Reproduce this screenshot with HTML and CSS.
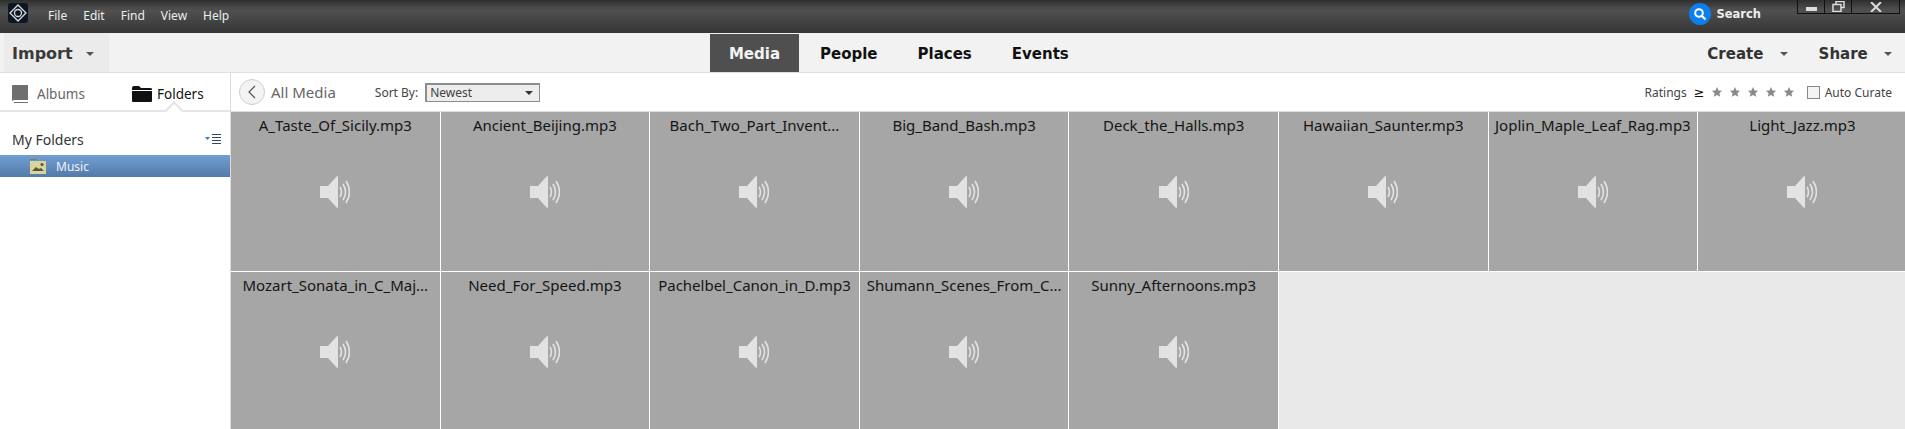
FILE: index.html
```html
<!DOCTYPE html>
<html lang="en">
<head>
  <meta charset="UTF-8">
  <title>Media</title>
  <link rel="stylesheet" href="styles.css">
</head>
<body>
  <svg class="defs" width="0" height="0">
    <symbol id="speaker" viewBox="0 0 30 32">
      <path d="M0 10h8l9-10q1 0 1 1v30q0 1-1 1l-9-10H0z" fill="#e2e2e2"/>
      <path d="M20 11q3 5 0 10M23 8q5 8 0 16M26 5q7 11 0 22" fill="none" stroke="#e2e2e2" stroke-width="1.6"/>
    </symbol>
    <symbol id="star" viewBox="0 0 12 12">
      <path d="M6 1l1.500 3.400 3.600.4-2.700 2.400.8 3.600L6 9l-3.200 1.800.8-3.600L.9 4.800l3.600-.4z" fill="#8a8a8a"/>
    </symbol>
  </svg>

  <header class="titlebar">
    <div class="logo">
      <svg width="20" height="20" viewBox="0 0 20 20">
        <path d="M10 2l8 8-8 8-8-8z" fill="none" stroke="#d8dde2" stroke-width="1.300"/>
        <circle cx="10" cy="10" r="3.500" fill="none" stroke="#d8dde2" stroke-width="1.300"/>
      </svg>
    </div>
    <nav class="menu">
      <span>File</span>
      <span>Edit</span>
      <span>Find</span>
      <span>View</span>
      <span>Help</span>
    </nav>
    <div class="search">
      <span class="search-icon">
        <svg width="14" height="14" viewBox="0 0 14 14">
          <circle cx="6" cy="6" r="3.800" fill="none" stroke="#fff" stroke-width="2"/>
          <path d="M9 9l3.500 3.500" stroke="#fff" stroke-width="2.200"/>
        </svg>
      </span>
      Search
    </div>
    <div class="window-btns">
      <span class="win-btn win-min"><i></i></span>
      <span class="win-btn win-max">
        <svg width="13" height="11" viewBox="0 0 13 11">
          <path d="M4 3V.5h8v6H9M1 3.500h8v7H1z" fill="none" stroke="#ddd" stroke-width="1.500"/>
        </svg>
      </span>
      <span class="win-btn win-close">
        <svg width="12" height="10" viewBox="0 0 12 10">
          <path d="M1 0l10 10M11 0L1 10" stroke="#ddd" stroke-width="2"/>
        </svg>
      </span>
    </div>
  </header>

  <div class="toolbar">
    <div class="import">Import <span class="caret"></span></div>
    <div class="tabs">
      <span class="tab active">Media</span>
      <span class="tab">People</span>
      <span class="tab">Places</span>
      <span class="tab">Events</span>
    </div>
    <div class="actions">
      <span class="action">Create <span class="caret"></span></span>
      <span class="action">Share <span class="caret"></span></span>
    </div>
  </div>

  <div class="main">
    <aside class="sidebar">
      <div class="side-tabs">
        <div class="side-tab">
          <svg width="18" height="20" viewBox="0 0 18 20">
            <path d="M1 2q0-1 1-1h15v15H3q-2 0-2 2zM3 18h14v1H3z" fill="#6f6f6f"/>
          </svg>
          Albums
        </div>
        <div class="side-tab current">
          <svg width="20" height="18" viewBox="0 0 20 18">
            <path d="M0 3q0-2 2-2h5l2 2h9q2 0 2 1v1H0zM0 6h20v10q0 1-1 1H1q-1 0-1-1z" fill="#111"/>
          </svg>
          Folders
        </div>
      </div>
      <div class="folders-head">
        <span>My Folders</span>
        <svg width="16" height="10" viewBox="0 0 16 10">
          <path d="M0 3h5L2.500 6z" fill="#3b7cc0"/>
          <path d="M7 .5h9M7 3.500h9M7 6.500h9M7 9.500h9" stroke="#34465a" stroke-width="1"/>
        </svg>
      </div>
      <div class="folder-row">
        <svg width="16" height="15" viewBox="0 0 16 15">
          <path d="M0 0h7v1H0z" fill="#7a7a70"/>
          <rect y="2" width="16" height="13" fill="#d8d49a"/>
          <path d="M2 12l4-4 3 2 2-1 3 3z" fill="#57553a"/>
          <circle cx="12" cy="5.500" r="1.500" fill="#57553a"/>
        </svg>
        Music
      </div>
    </aside>

    <section class="content">
      <div class="subbar">
        <span class="back">
          <svg width="10" height="14" viewBox="0 0 10 14">
            <path d="M8 1L2 7l6 6" fill="none" stroke="#555" stroke-width="1.200"/>
          </svg>
        </span>
        <span class="crumb">All Media</span>
        <span class="sort-label">Sort By:</span>
        <span class="sort-select">Newest <span class="sort-caret"></span></span>
        <div class="ratings">
          <span>Ratings</span>
          <span class="gte">≥</span>
          <svg class="star"><use href="#star"/></svg>
          <svg class="star"><use href="#star"/></svg>
          <svg class="star"><use href="#star"/></svg>
          <svg class="star"><use href="#star"/></svg>
          <svg class="star"><use href="#star"/></svg>
          <span class="check"></span>
          <span>Auto Curate</span>
        </div>
      </div>

      <div class="grid">
        <div class="cell"><div class="name">A_Taste_Of_Sicily.mp3</div><svg class="speaker"><use href="#speaker"/></svg></div>
        <div class="cell"><div class="name">Ancient_Beijing.mp3</div><svg class="speaker"><use href="#speaker"/></svg></div>
        <div class="cell"><div class="name">Bach_Two_Part_Invent...</div><svg class="speaker"><use href="#speaker"/></svg></div>
        <div class="cell"><div class="name">Big_Band_Bash.mp3</div><svg class="speaker"><use href="#speaker"/></svg></div>
        <div class="cell"><div class="name">Deck_the_Halls.mp3</div><svg class="speaker"><use href="#speaker"/></svg></div>
        <div class="cell"><div class="name">Hawaiian_Saunter.mp3</div><svg class="speaker"><use href="#speaker"/></svg></div>
        <div class="cell"><div class="name">Joplin_Maple_Leaf_Rag.mp3</div><svg class="speaker"><use href="#speaker"/></svg></div>
        <div class="cell"><div class="name">Light_Jazz.mp3</div><svg class="speaker"><use href="#speaker"/></svg></div>
        <div class="cell"><div class="name">Mozart_Sonata_in_C_Maj...</div><svg class="speaker"><use href="#speaker"/></svg></div>
        <div class="cell"><div class="name">Need_For_Speed.mp3</div><svg class="speaker"><use href="#speaker"/></svg></div>
        <div class="cell"><div class="name">Pachelbel_Canon_in_D.mp3</div><svg class="speaker"><use href="#speaker"/></svg></div>
        <div class="cell"><div class="name">Shumann_Scenes_From_C...</div><svg class="speaker"><use href="#speaker"/></svg></div>
        <div class="cell"><div class="name">Sunny_Afternoons.mp3</div><svg class="speaker"><use href="#speaker"/></svg></div>
      </div>
    </section>
  </div>
</body>
</html>
```

FILE: styles.css
```css
* {
  box-sizing: border-box;
}
html, body {
  height: 100%;
}
body {
  margin: 0;
  display: flex;
  flex-direction: column;
  overflow: hidden;
  font-family: "Noto Sans", "DejaVu Sans", sans-serif;
  font-size: 13px;
  color: #222;
  background: #fff;
}
.defs {
  position: absolute;
}
.titlebar {
  height: 33px;
  flex: none;
  display: flex;
  align-items: flex-start;
  background: linear-gradient(#2f2f2f, #505050 30%, #363636);
  color: #eee;
}
.logo {
  width: 20px;
  height: 20px;
  margin: 3px 0 0 8px;
  background: #0d1724;
  border-radius: 3px;
}
.menu {
  display: flex;
  gap: 16px;
  margin: 7px 0 0 20px;
  font-size: 12px;
  line-height: 18px;
}
.search {
  display: flex;
  align-items: center;
  gap: 5px;
  margin: 3px 0 0 auto;
  height: 22px;
  font-family: "DejaVu Sans", sans-serif;
  font-size: 11.500px;
  font-weight: 700;
}
.search-icon {
  width: 22px;
  height: 22px;
  border-radius: 50%;
  background: #0b7ff0;
  display: flex;
  align-items: center;
  justify-content: center;
}
.window-btns {
  display: flex;
  margin: 0 5px 0 36px;
  height: 14px;
  border: 1px solid #111;
  border-top: 0;
}
.win-btn {
  display: flex;
  align-items: center;
  justify-content: center;
  height: 13px;
  overflow: hidden;
}
.win-min {
  width: 27px;
  border-right: 1px solid #111;
}
.win-min i {
  width: 11px;
  height: 4px;
  margin-top: 5px;
  background: #ddd;
}
.win-max {
  width: 27px;
  border-right: 1px solid #111;
}
.win-close {
  width: 47px;
}

.toolbar {
  height: 40px;
  flex: none;
  display: grid;
  grid-template-columns: 710px auto 1fr;
  background: #f2f2f2;
  border-bottom: 1px solid #e0e0e0;
}
.import {
  align-self: end;
  display: flex;
  align-items: center;
  width: 105px;
  height: 39px;
  margin-left: 4px;
  padding: 2px 0 0 8px;
  background: #ebebeb;
  font-family: "DejaVu Sans", sans-serif;
  font-size: 16px;
  font-weight: 700;
  color: #3a3a3a;
}
.import .caret {
  margin-left: 13px;
}
.caret {
  display: inline-block;
  width: 0;
  height: 0;
  margin-left: 11px;
  vertical-align: 3px;
  border: 4px solid transparent;
  border-top: 4px solid #555;
  border-bottom: 0;
}
.tabs {
  display: flex;
  padding-top: 1px;
}
.tab {
  display: flex;
  align-items: center;
  padding: 2px 20px 0;
  font-family: "DejaVu Sans", sans-serif;
  font-size: 15px;
  font-weight: 700;
  color: #111;
}
.tab.active {
  width: 89px;
  margin-right: 1px;
  justify-content: center;
  padding: 2px 0 0;
  background: #4f4f4f;
  color: #f4f4f4;
}
.actions {
  display: flex;
  justify-content: flex-end;
  align-items: center;
  gap: 31px;
  padding: 2px 13px 0 0;
}
.action {
  font-family: "DejaVu Sans", sans-serif;
  font-size: 15px;
  font-weight: 700;
  color: #333;
}

.main {
  flex: 1;
  display: flex;
  min-height: 0;
}
.sidebar {
  width: 231px;
  flex: none;
  border-right: 1px solid #dcdcdc;
}
.side-tabs {
  position: relative;
  display: flex;
  height: 39px;
  border-bottom: 2px solid #e4e4e4;
}
.side-tabs::after {
  content: "";
  position: absolute;
  left: 167px;
  bottom: -2px;
  width: 12px;
  height: 12px;
  transform: translateY(6px) rotate(45deg);
  border-left: 2px solid #e4e4e4;
  border-top: 2px solid #e4e4e4;
  background: #fff;
}
.side-tab {
  display: flex;
  align-items: center;
  gap: 8px;
  padding: 4px 0 0 11px;
  font-size: 13.500px;
  color: #666;
}
.side-tab:first-child {
  width: 120px;
}
.side-tab.current {
  gap: 5px;
  padding-left: 12px;
  color: #111;
}
.folders-head {
  display: flex;
  align-items: center;
  justify-content: space-between;
  height: 43px;
  padding: 11px 9px 0 12px;
  font-size: 14px;
  color: #333;
}
.folder-row {
  display: flex;
  align-items: center;
  gap: 10px;
  height: 22px;
  padding-left: 30px;
  background: linear-gradient(#719fd4, #537aa8);
  color: #eef3fa;
  font-size: 12px;
}

.content {
  flex: 1;
  min-width: 0;
  display: flex;
  flex-direction: column;
}
.subbar {
  height: 39px;
  flex: none;
  display: flex;
  align-items: center;
  padding-left: 8px;
  border-bottom: 1px solid #ddd;
}
.back {
  width: 26px;
  height: 26px;
  border: 1px solid #ccc;
  border-radius: 50%;
  background: #f3f3f3;
  display: flex;
  align-items: center;
  justify-content: center;
}
.crumb {
  margin-left: 6px;
  font-size: 15px;
  color: #666;
}
.sort-label {
  margin-left: 39px;
  font-size: 12px;
  color: #444;
}
.sort-select {
  position: relative;
  width: 115px;
  height: 19px;
  margin-left: 7px;
  padding-left: 3px;
  border: 2px solid #8c8c8c;
  border-right-width: 1px;
  border-bottom-width: 1px;
  background: #ededed;
  font-size: 12px;
  line-height: 16px;
  color: #444;
}
.sort-caret {
  position: absolute;
  right: 6px;
  top: 6px;
  border: 4px solid transparent;
  border-top: 4px solid #333;
  border-bottom: 0;
}
.ratings {
  display: flex;
  align-items: center;
  gap: 6px;
  margin-left: auto;
  padding-right: 13px;
  font-size: 12px;
  color: #444;
}
.gte {
  margin-left: 1px;
  font-size: 13px;
  color: #111;
}
.star {
  width: 12px;
  height: 12px;
}
.check {
  width: 13px;
  height: 13px;
  margin-left: 6px;
  margin-right: -1px;
  border: 1px solid #888;
  background: #f4f4f4;
}

.grid {
  flex: 1;
  display: grid;
  grid-template-columns: repeat(8, 208.6px);
  grid-auto-rows: 159px;
  gap: 1px;
  overflow: hidden;
  background: #e9e9e9;
}
.cell {
  display: flex;
  flex-direction: column;
  align-items: center;
  background: #a6a6a6;
  outline: 1px solid #fff;
}
.name {
  margin-top: 3px;
  font-size: 15px;
  line-height: 21px;
  color: #151515;
  white-space: nowrap;
}
.speaker {
  width: 30px;
  height: 32px;
  margin-top: 40px;
}
```
